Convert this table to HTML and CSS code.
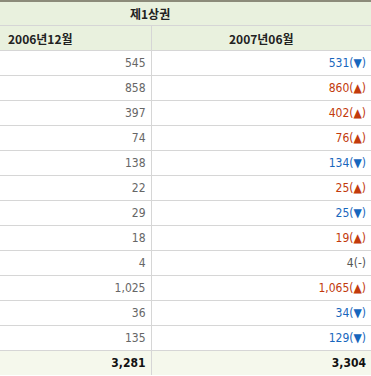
FILE: index.html
```html
<!DOCTYPE html>
<html lang="ko">
<head>
<meta charset="utf-8">
<link rel="stylesheet" href="styles.css">
</head>
<body>
<table class="stat">
  <colgroup><col class="c1"><col class="c2"></colgroup>
  <thead>
    <tr class="h1"><th colspan="2"><span class="title">제1상권</span></th></tr>
    <tr class="h2"><th class="left">2006년12월</th><th class="ctr">2007년06월</th></tr>
  </thead>
  <tbody>
    <tr><td>545</td><td class="dn">531(▼)</td></tr>
    <tr><td>858</td><td class="up">860(▲)</td></tr>
    <tr><td>397</td><td class="up">402(▲)</td></tr>
    <tr><td>74</td><td class="up">76(▲)</td></tr>
    <tr><td>138</td><td class="dn">134(▼)</td></tr>
    <tr><td>22</td><td class="up">25(▲)</td></tr>
    <tr><td>29</td><td class="dn">25(▼)</td></tr>
    <tr><td>18</td><td class="up">19(▲)</td></tr>
    <tr><td>4</td><td class="eq">4(-)</td></tr>
    <tr><td>1,025</td><td class="up">1,065(▲)</td></tr>
    <tr><td>36</td><td class="dn">34(▼)</td></tr>
    <tr><td>135</td><td class="dn">129(▼)</td></tr>
  </tbody>
  <tfoot>
    <tr class="total"><td>3,281</td><td>3,304</td></tr>
  </tfoot>
</table>
</body>
</html>
```
FILE: styles.css
```css
html, body { margin: 0; padding: 0; background: #fff; }
body { font-family: "DejaVu Sans", "Noto Sans CJK KR", sans-serif; font-size: 12px; }
.stat { border-collapse: collapse; width: 371px; table-layout: fixed; border-top: 2px solid #8c8b7a; }
.c1 { width: 151px; }
.c2 { width: 220px; }
.stat th, .stat td { height: 24px; padding: 0 5px; border-bottom: 1px solid #d6d6d6; border-left: 1px solid #d6d6d6; }
.stat tr > :first-child { border-left: none; }
.stat th { background: #e9f1de; color: #222; font-family: "Noto Sans CJK KR", sans-serif; font-weight: bold; font-size: 12px; }
.h1 th { height: 23px; text-align: left; padding-left: 130px; }
.h2 th { height: 24px; }
.h2 .left { text-align: left; padding-left: 8px; }
.h2 .ctr { text-align: center; }
.stat td { text-align: right; color: #666; font-family: "DejaVu Sans Condensed", "DejaVu Sans", sans-serif; }
.stat td.up { color: #c23a0c; }
.stat td.dn { color: #1766bd; }
.stat td.eq { color: #555; }
.total td { background: #f5f8ec; color: #111; font-weight: bold; border-bottom: none; }
```
